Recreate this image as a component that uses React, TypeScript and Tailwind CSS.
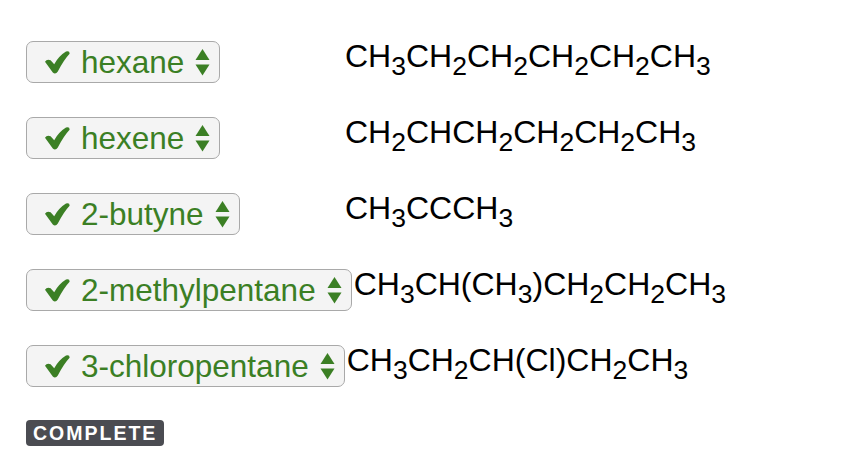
import React from "react"

type Part = { t: string; sub?: boolean }

// formula text: digits become subscripts
function parse(f: string): Part[] {
  const out: Part[] = []
  for (const ch of f) {
    const sub = /[0-9]/.test(ch)
    const last = out[out.length - 1]
    if (last && !!last.sub === sub) last.t += ch
    else out.push({ t: ch, sub })
  }
  return out
}

const ROWS = [
  { name: "hexane", formula: "CH3CH2CH2CH2CH2CH3" },
  { name: "hexene", formula: "CH2CHCH2CH2CH2CH3" },
  { name: "2-butyne", formula: "CH3CCCH3" },
  { name: "2-methylpentane", formula: "CH3CH(CH3)CH2CH2CH3" },
  { name: "3-chloropentane", formula: "CH3CH2CH(Cl)CH2CH3" },
]

function Check() {
  return (
    <svg width="25" height="23" viewBox="0 0 25 23" className="shrink-0">
      <path
        d="M0 10.8 Q1.8 7.6 5.6 9.2 L9.2 13.2 Q14 4.8 21 0.6 Q24.8 -0.6 24.6 2.8 Q18.6 9.2 12.8 20.6 Q10.6 23.8 7.8 21.6 Z"
        fill="#3b7f24"
      />
    </svg>
  )
}

function Arrows() {
  return (
    <svg width="15" height="27" viewBox="0 0 15 27" className="shrink-0">
      <path d="M7.5 0 L14.5 11 L0.5 11 Z" fill="#3b7f24" />
      <path d="M0.5 15.5 L14.5 15.5 L7.5 26.5 Z" fill="#3b7f24" />
    </svg>
  )
}

function Picker({ name }: { name: string }) {
  return (
    <div className="inline-flex h-[42px] shrink-0 items-center rounded-[7px] border-[1.5px] border-[#a9a9a9] bg-[#f4f4f4] pl-[18px] pr-[9px]">
      <Check />
      <span className="ml-[11px] text-[31.5px] leading-[34px] text-[#3b7f24]">{name}</span>
      <span className="ml-[11px] flex">
        <Arrows />
      </span>
    </div>
  )
}

function Formula({ f }: { f: string }) {
  return (
    <div className="ml-[2px] mt-[-3px] whitespace-nowrap text-[32px] leading-[36px] text-black">
      {parse(f).map((p, i) =>
        p.sub ? (
          <sub key={i} className="-bottom-2 text-[26.5px]">
            {p.t}
          </sub>
        ) : (
          <span key={i}>{p.t}</span>
        )
      )}
    </div>
  )
}

export default function App() {
  return (
    <div
      className="min-h-[466px] w-[850px] overflow-hidden bg-white pl-[26px] pt-[41px]"
      style={{ fontFamily: '"Liberation Sans", Arial, sans-serif' }}
    >
      <div className="flex flex-col gap-[34px]">
        {ROWS.map((r) => (
          <div key={r.name} className="flex items-start">
            <div className="flex min-w-[317px]">
              <Picker name={r.name} />
            </div>
            <Formula f={r.formula} />
          </div>
        ))}
        <div className="-mt-[1px] flex">
          <div className="rounded-[4px] bg-[#4b4c52] px-[7px] py-[3px] text-[19.5px] font-bold leading-[20px] tracking-[2px] text-white">
            COMPLETE
          </div>
        </div>
      </div>
    </div>
  )
}
